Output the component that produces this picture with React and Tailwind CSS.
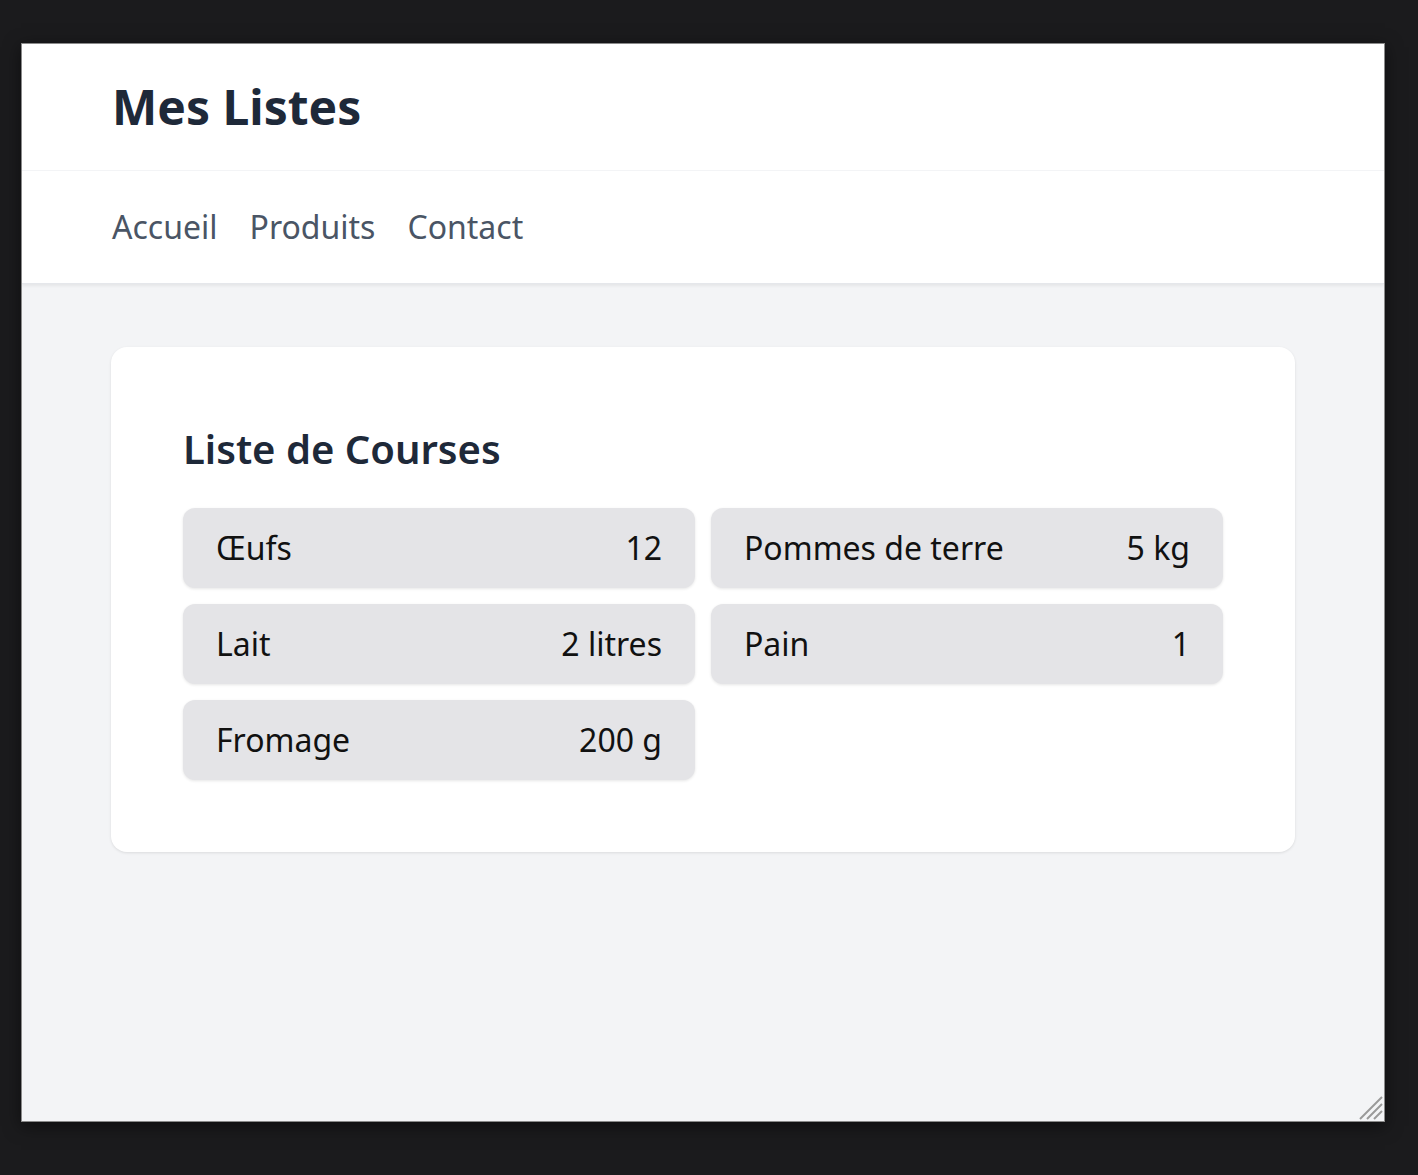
import React from "react";

const items = [
    { name: "Œufs", qty: "12" },
    { name: "Pommes de terre", qty: "5 kg" },
    { name: "Lait", qty: "2 litres" },
    { name: "Pain", qty: "1" },
    { name: "Fromage", qty: "200 g" },
];

const App = () => {
    return (
        <div
            className="min-h-screen bg-[#1b1b1d] pt-[43px] pl-[21px]"
            style={{ fontFamily: '"Noto Sans", "Open Sans", sans-serif' }}
        >
            <div className="relative flex flex-col w-[1364px] h-[1079px] bg-gray-100 border border-[#8a8a8a] shadow-[0_4px_16px_rgba(0,0,0,0.5)] overflow-hidden">
                {/* En-tête */}
                <header className="bg-white h-[127px] px-[90px] flex items-center border-b border-gray-100">
                    <h1 className="text-[48px] leading-[64px] font-bold text-gray-800">
                        Mes Listes
                    </h1>
                </header>

                {/* Navigation */}
                <nav className="bg-white h-[113px] px-[90px] flex items-center gap-[32px] border-b border-gray-200 shadow-[0_2px_3px_rgba(0,0,0,0.06)]">
                    <a href="#" className="text-[32px] text-gray-600">
                        Accueil
                    </a>
                    <a href="#" className="text-[32px] text-gray-600">
                        Produits
                    </a>
                    <a href="#" className="text-[32px] text-gray-600">
                        Contact
                    </a>
                </nav>

                {/* Contenu */}
                <main className="px-[89px] pt-[63px]">
                    <div className="bg-white rounded-[16px] shadow-[0_1px_3px_rgba(0,0,0,0.1)] p-[72px]">
                        <h2 className="text-[40px] leading-[60px] font-semibold text-gray-800 mb-[29px]">
                            Liste de Courses
                        </h2>
                        <div className="grid grid-cols-2 gap-[16px]">
                            {items.map((item) => (
                                <div
                                    key={item.name}
                                    className="h-[80px] px-[33px] flex items-center justify-between rounded-[12px] bg-[#e4e4e7] shadow-[0_1px_3px_rgba(0,0,0,0.1)] text-[32px] text-[#111]"
                                >
                                    <span>{item.name}</span>
                                    <span>{item.qty}</span>
                                </div>
                            ))}
                        </div>
                    </div>
                </main>

                {/* Poignée de redimensionnement */}
                <svg
                    className="absolute right-[1px] bottom-[1px]"
                    width="26"
                    height="26"
                    viewBox="0 0 26 26"
                >
                    <path
                        d="M25 3 L3 25 M25 10 L10 25 M25 17 L17 25"
                        stroke="#9a9a9a"
                        strokeWidth="2"
                    />
                </svg>
            </div>
        </div>
    );
};

export default App;
